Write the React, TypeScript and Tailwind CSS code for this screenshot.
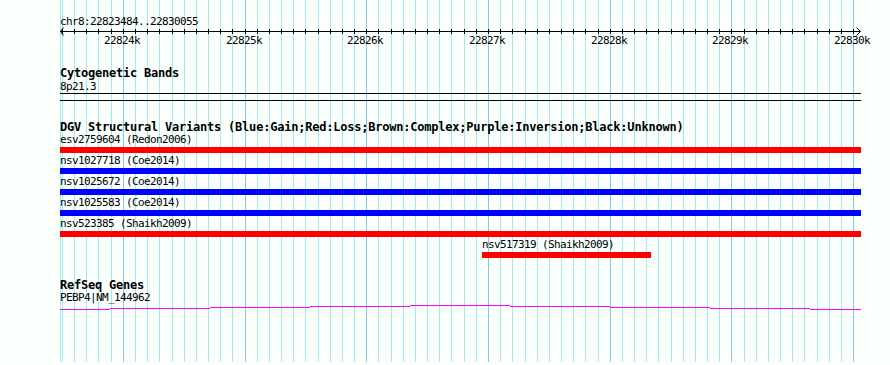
import React from "react";

const START = 22823484;
const X0 = 60;
const SCALE = 800 / 6572;
const xOf = (bp: number) => Math.round(X0 + (bp - START) * SCALE);

const gridBps: number[] = [];
for (let bp = 22823500; bp <= 22830000; bp += 100) gridBps.push(bp);
const majors = [22824000, 22825000, 22826000, 22827000, 22828000, 22829000, 22830000];

const rows = [
  { label: "esv2759604 (Redon2006)", color: "#ff0000", x: 0, w: 801 },
  { label: "nsv1027718 (Coe2014)", color: "#0000ff", x: 0, w: 801 },
  { label: "nsv1025672 (Coe2014)", color: "#0000ff", x: 0, w: 801 },
  { label: "nsv1025583 (Coe2014)", color: "#0000ff", x: 0, w: 801 },
  { label: "nsv523385 (Shaikh2009)", color: "#ff0000", x: 0, w: 801 },
  { label: "nsv517319 (Shaikh2009)", color: "#ff0000", x: 422, w: 169 },
];

const wiggle: [number, number, number][] = [
  [60, 110, 309],
  [110, 210, 308],
  [210, 310, 307],
  [310, 410, 306],
  [410, 510, 305],
  [510, 610, 306],
  [610, 710, 307],
  [710, 810, 308],
  [810, 861, 309],
];

const mono = "font-['DejaVu_Sans_Mono',monospace]";
const small = "text-[11px] tracking-[-0.62px]";
const bold = "text-[12px] font-bold tracking-[-0.22px]";

export default function App() {
  return (
    <div className={`relative w-[890px] h-[365px] overflow-hidden bg-[#fbfffb] text-black ${mono}`}>
      {/* grid */}
      <svg className="absolute left-0 top-0" width={890} height={365}>
        <line x1={60.5} x2={60.5} y1={0} y2={362} stroke="#a5e9ee" strokeWidth={1} />
        {gridBps.map((bp) => (
          <line
            key={bp}
            x1={xOf(bp) + 0.5}
            x2={xOf(bp) + 0.5}
            y1={0}
            y2={362}
            stroke={bp % 1000 === 0 ? "#86c6ea" : "#a5e9ee"}
            strokeWidth={1}
          />
        ))}
      </svg>

      <div className="relative pl-[60px] w-[861px] flex flex-col">
        {/* ruler */}
        <div className="relative h-[50px]">
          <div className={`pt-[15px] h-[28px] leading-[13px] whitespace-nowrap ${small}`}>chr8:22823484..22830055</div>
          <svg className="absolute left-[-60px] top-0" width={890} height={50}>
            <line x1={60} x2={860} y1={31.5} y2={31.5} stroke="#000" strokeWidth={1} />
            <polyline points="63.5,27.5 60.5,31.5 63.5,35.5" fill="none" stroke="#000" strokeWidth={1} />
            <polyline points="856.5,27.5 860.5,31.5 856.5,35.5" fill="none" stroke="#000" strokeWidth={1} />
            {gridBps.map((bp) => (
              <line key={bp} x1={xOf(bp) + 0.5} x2={xOf(bp) + 0.5} y1={29} y2={34} stroke="#000" strokeWidth={1} />
            ))}
          </svg>
          {majors.map((bp) => (
            <span
              key={bp}
              className={`absolute top-[34px] leading-[13px] whitespace-nowrap -translate-x-1/2 ${small}`}
              style={{ left: xOf(bp) - 60 - 1 }}
            >
              {bp / 1000}k
            </span>
          ))}
        </div>

        {/* cytogenetic bands */}
        <div className={`mt-[17px] h-[13px] leading-[13px] whitespace-nowrap ${bold}`}>Cytogenetic Bands</div>
        <div className={`h-[13px] leading-[13px] whitespace-nowrap ${small}`}>8p21.3</div>
        <div className="h-[8px] w-[801px] border-y border-black" />

        {/* DGV */}
        <div className={`mt-[21px] h-[10px] leading-[10px] whitespace-nowrap ${bold}`}>
          DGV Structural Variants (Blue:Gain;Red:Loss;Brown:Complex;Purple:Inversion;Black:Unknown)
        </div>
        {rows.map((r) => (
          <div key={r.label} className="flex flex-col w-[801px]">
            <div
              className={`h-[15px] pt-[2px] leading-[12px] whitespace-nowrap ${small}`}
              style={{ marginLeft: r.x }}
            >
              {r.label}
            </div>
            <div className="h-[6px]" style={{ marginLeft: r.x, width: r.w, background: r.color }} />
          </div>
        ))}

        {/* RefSeq */}
        <div className={`mt-[22px] h-[11px] leading-[11px] whitespace-nowrap ${bold}`}>RefSeq Genes</div>
        <div className={`h-[13px] leading-[13px] whitespace-nowrap ${small}`}>PEBP4|NM_144962</div>
        <svg className="block ml-[-60px]" width={890} height={7}>
          {wiggle.map(([a, b, y]) => (
            <line key={a} x1={a} x2={b} y1={y - 304 + 0.5} y2={y - 304 + 0.5} stroke="#ff00ff" strokeWidth={1} />
          ))}
        </svg>
      </div>
    </div>
  );
}
